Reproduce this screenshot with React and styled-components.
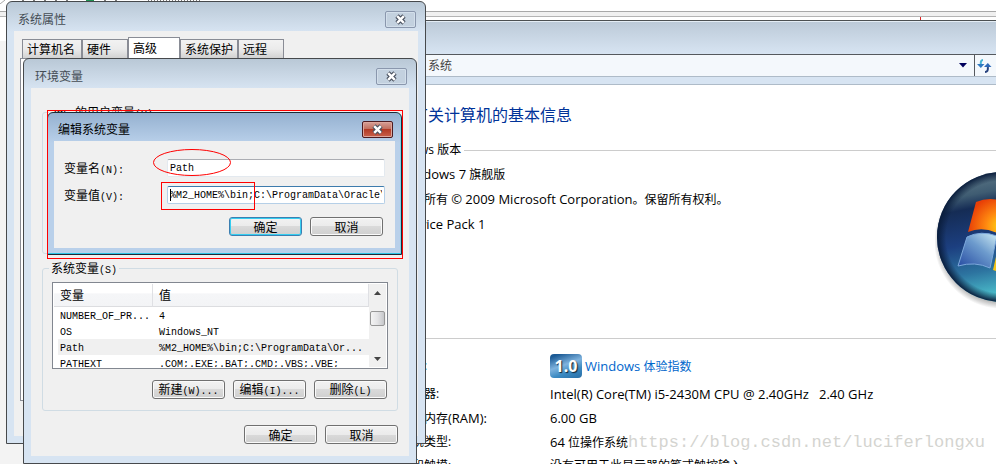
import React from 'react'
import styled, { createGlobalStyle, css } from 'styled-components'

const GlobalStyle = createGlobalStyle`
  * {
    box-sizing: border-box;
  }
  body {
    margin: 0;
    overflow: hidden;
    background: #f3f3f3;
    color: #000;
    font: 12px/16px 'Open Sans', 'Noto Sans CJK SC', sans-serif;
  }
  button, input {
    font: inherit;
    color: inherit;
    margin: 0;
    padding: 0;
  }
`

const Desktop = styled.main`
  position: relative;
  height: 100vh;
  overflow: hidden;
`

/* browser behind everything */
const BrowserTop = styled.div`
  height: 17px;
  background: #fff;
  border-bottom: 1px solid #b4b4b4;
`
const BrowserTabs = styled.div`
  height: 11px;
  > svg {
    display: block;
  }
`
const BrowserLine = styled.div`
  height: 5px;
  border-top: 1px solid #a8a8a8;
  background: #f0f0f0;
`
const BrowserPage = styled.div`
  height: 24px;
  background: #fff;
`
const RedTick = styled.i`
  display: block;
  width: 1px;
  height: 3px;
  margin-left: auto;
  margin-right: 75px;
  background: #d22;
`

/* explorer window */
const Explorer = styled.section`
  position: absolute;
  left: 40px;
  right: 0;
  top: 20px;
  bottom: 0;
  overflow: hidden;
  background: #fff;
  border-top: 1px solid #4c5052;
`
const ExplorerTitle = styled.div`
  height: 33px;
  background: linear-gradient(#bccad8, #d7e4f2);
  border-top: 1px solid #e4edf5;
`
const AddressBar = styled.div`
  display: flex;
  align-items: center;
  height: 23px;
  padding-left: 388px;
  background: #f4f8fc;
  border-top: 1px solid #55595e;
  border-bottom: 1px solid #aebbc8;
  color: #444;
`
const AddressText = styled.span`
  flex: 1;
`
const BarButton = styled.button`
  display: flex;
  align-items: center;
  justify-content: center;
  width: 22px;
  height: 21px;
  border: 0;
  background: none;
  & + & {
    padding-right: 2px;
    border-left: 1px solid #55595e;
  }
`
const ExplorerEdge = styled.div`
  height: 8px;
  background: #d7e4f2;
  border-bottom: 1px solid #aebbc8;
`
const SystemInfo = styled.div`
  padding: 19px 0 0 340px;
`
const Heading = styled.h1`
  margin: 0 0 16px;
  font-size: 16px;
  line-height: 22px;
  font-weight: 400;
  color: #003399;
`
const SectionTitle = styled.h2`
  display: flex;
  align-items: center;
  gap: 3px;
  margin: 0;
  padding-left: 3px;
  font-size: 12px;
  line-height: 16px;
  font-weight: 400;
  white-space: nowrap;
  &::after {
    content: '';
    flex: 1;
    height: 1px;
    background: #ccc;
  }
`
const Edition = styled.div`
  display: flex;
  justify-content: space-between;
  height: 180px;
  padding: 4px 0 0 20px;
`
const EditionText = styled.div`
  white-space: nowrap;
  p {
    margin: 0;
    line-height: 25px;
  }
`
const Orb = styled.svg`
  flex: none;
  margin: 9px -73px 0 0;
`
const Rule = styled.hr`
  height: 1px;
  margin: 0;
  border: 0;
  background: #ccc;
`
const Specs = styled.table`
  margin: 15px 0 0 20px;
  border-collapse: collapse;
  white-space: nowrap;
  th, td {
    height: 24px;
    padding: 0;
    text-align: left;
    font-weight: 400;
  }
  th {
    width: 150px;
  }
  tr:first-child > * {
    height: 28px;
    color: #0066cc;
    vertical-align: top;
    line-height: 24px;
  }
`
const ScoreLink = styled.a`
  display: flex;
  gap: 3px;
  color: #0066cc;
  text-decoration: none;
`
const Score = styled.span`
  width: 32px;
  height: 24px;
  border-radius: 4px;
  background: linear-gradient(160deg, #1b5a95 10%, #7fb3de 45%, #3b8ac2 70%, #2a6ea5);
  color: #fff;
  font: bold 16px/24px 'Noto Sans', sans-serif;
  text-align: center;
  text-shadow: 1px 1px 1px #123;
`
const Latin = styled.span`
  font-size: 13px;
`
const Watermark = styled.div`
  position: absolute;
  right: 11px;
  bottom: 9px;
  color: #d4d4d0;
  font: 17px/24px 'Liberation Mono', monospace;
`

/* dialogs */
const Frame = styled.section`
  position: absolute;
  left: ${p => p.$x}px;
  top: ${p => p.$y}px;
  width: ${p => p.$w}px;
  padding: 0 7px 7px;
  border: 1px solid #46494c;
  border-radius: 6px 6px 0 0;
  background: linear-gradient(#b9c8d6, #d7e4f2 30px);
  font-family: 'Noto Sans CJK SC', sans-serif;
  ${p =>
    p.$active &&
    css`
      padding: 0 6px 6px;
      border-color: #1c2a36;
      background: linear-gradient(#95b1d0, #b9d0ea 30px);
      box-shadow: inset 0 -1px #2ec5e6, inset -1px 0 #7fd4ea;
    `}
`
const TitleBar = styled.header`
  display: flex;
  align-items: center;
  justify-content: space-between;
  height: ${p => (p.$active ? 28 : 29)}px;
  padding: ${p => (p.$active ? 4 : 5)}px 2px 0 4px;
  color: ${p => (p.$active ? '#000' : '#444c54')};
`
const Close = styled.button`
  display: flex;
  align-items: center;
  justify-content: center;
  width: 31px;
  height: 17px;
  border: 1px solid #8a97ad;
  border-radius: 2px;
  background: #c3d1df;
  box-shadow: inset 0 0 0 1px #d3dfeb;
  ${p =>
    p.$active &&
    css`
      border-color: #4d1b20;
      background: linear-gradient(#d5a098, #c3705f 45%, #b23a25 50%, #c9614c);
      box-shadow: inset 0 0 0 1px #dda69c;
    `}
`
const Body = styled.div`
  background: #f0f0f0;
`
const PropsBody = styled(Body)`
  padding: 6px 6px 35px;
`
const EnvBody = styled(Body)`
  padding: 17px 11px 12px;
`
const EditBody = styled(Body)`
  display: flex;
  flex-direction: column;
  gap: 9px;
  padding: 18px 10px 12px;
`
const TabList = styled.div`
  display: flex;
  align-items: flex-end;
  height: 21px;
  padding-left: 2px;
`
const Tab = styled.button`
  width: ${p => p.$w}px;
  height: ${p => (p.$current ? 21 : 19)}px;
  padding-left: 4px;
  border: 1px solid #898c95;
  border-bottom: 0;
  background: ${p => (p.$current ? '#fff' : 'linear-gradient(#f2f2f2, #ebebeb 50%, #d2d2d2)')};
  line-height: 18px;
  text-align: left;
`
const TabPanel = styled.div`
  height: 343px;
  background: #fff;
  border: 1px solid #898c95;
`
const Group = styled.fieldset`
  min-width: 0;
  height: ${p => p.$h}px;
  margin: 0 0 7px;
  padding: 7px 9px 0;
  border: 1px solid #d0dce4;
  border-radius: 3px;
  & + & {
    margin-bottom: 14px;
  }
`
const Legend = styled.legend`
  padding: 0 2px;
  margin-left: -3px;
  height: 14px;
  line-height: 14px;
`
/* latin glyphs are half the width of the chinese ones */
const Half = styled.span`
  font: 10px/12px 'Liberation Mono', monospace;
  white-space: pre;
`
const Buttons = styled.div`
  display: flex;
  justify-content: flex-end;
  gap: 8px;
  margin-top: ${p => p.$top || 0}px;
  padding-right: ${p => p.$end || 0}px;
`
const Button = styled.button`
  width: 73px;
  height: 19px;
  border: 1px solid ${p => (p.$primary ? '#3c7fb1' : '#707070')};
  border-radius: 3px;
  background: linear-gradient(#f2f2f2, #ebebeb 50%, #dadada 50%, #cfcfcf);
  box-shadow: inset 0 0 0 1px ${p => (p.$primary ? '#35cdf0' : '#fafafa')};
  line-height: 16px;
  white-space: nowrap;
`
const List = styled.div`
  display: flex;
  height: 87px;
  padding: 1px;
  border: 1px solid #828790;
  background: #fff;
  overflow: hidden;
`
const ListView = styled.div`
  flex: 1;
  overflow: hidden;
`
const Variables = styled.table`
  width: 100%;
  table-layout: fixed;
  border-spacing: 0;
  th, td {
    padding: 0 0 0 6px;
    text-align: left;
    font-weight: 400;
    white-space: nowrap;
  }
  th {
    height: 23px;
    background: linear-gradient(#fff 40%, #f5f6f8 45%, #f3f4f6);
    border-right: 1px solid #dfe0e4;
    border-bottom: 1px solid #dcdde0;
  }
  th:first-child {
    width: 99px;
  }
`
const Row = styled.tr`
  td {
    height: 16px;
    line-height: 12px;
    background: ${p => (p.$selected ? '#f0f0f0' : '#fff')};
  }
  td:first-child {
    padding-left: 2px;
    border-left: 4px solid #fff;
  }
`
const Scroll = styled.div`
  display: flex;
  flex-direction: column;
  width: 17px;
  background: #f0f0f0;
`
const Arrow = styled.button`
  height: 17px;
  border: 0;
  background: none;
  > svg {
    display: block;
    margin: auto;
  }
`
const Track = styled.div`
  flex: 1;
  padding: 10px 1px 0;
`
const Thumb = styled.div`
  height: 15px;
  border: 1px solid #979797;
  border-radius: 2px;
  background: linear-gradient(to right, #f4f4f4, #e4e4e6 50%, #c6c7ca);
`
const Field = styled.div`
  display: flex;
  align-items: center;
  label {
    width: 103px;
  }
  input {
    flex: 1;
    min-width: 0;
    height: 18px;
    padding: 0 2px;
    border: 1px solid #e3e9ef;
    border-top-color: #abadb3;
    border-radius: 2px;
    background: #fff;
    font: 10px/14px 'Liberation Mono', monospace;
    outline: 0;
  }
`
const FocusField = styled(Field)`
  margin-bottom: 4px;
  input {
    border-color: #b5cfe7;
    border-top-color: #3d7bad;
    background: linear-gradient(#000, #000) 2px 2px / 1px 12px no-repeat, #fff;
  }
`
const Marks = styled.svg`
  position: absolute;
  left: 47px;
  top: 110px;
  pointer-events: none;
`

const CloseButton = ({ active }) => (
  <Close $active={active} aria-label="关闭">
    <svg width="13" height="11" viewBox="0 0 13 11">
      <path d="M3 2 L10 9 M10 2 L3 9" stroke="#4a5260" strokeWidth="4.6" />
      <path d="M3.2 2.2 L9.8 8.8 M9.8 2.2 L3.2 8.8" stroke="#fff" strokeWidth="2.4" />
    </svg>
  </Close>
)

const Dialog = ({ title, active, children, ...rest }) => (
  <Frame $active={active} {...rest}>
    <TitleBar $active={active}>
      {title}
      <CloseButton active={active} />
    </TitleBar>
    {children}
  </Frame>
)

const tabs = [
  ['计算机名', 60],
  ['硬件', 46],
  ['高级', 52, true],
  ['系统保护', 58],
  ['远程', 46],
]

const variables = [
  ['NUMBER_OF_PR...', '4'],
  ['OS', 'Windows_NT'],
  ['Path', '%M2_HOME%\\bin;C:\\ProgramData\\Or...'],
  ['PATHEXT', '.COM;.EXE;.BAT;.CMD;.VBS;.VBE;'],
]

const specs = [
  ['处理器:', <Latin>Intel(R) Core(TM) i5-2430M CPU @ 2.40GHz{'\u00a0\u00a0 '}2.40 GHz</Latin>],
  [<>安装内存<Latin>(RAM):</Latin></>, <Latin>6.00 GB</Latin>],
  ['系统类型:', <><Latin>64</Latin> 位操作系统</>],
  ['笔和触摸:', '没有可用于此显示器的笔式触控输入'],
]

const WindowsOrb = () => (
  <Orb width="134" height="138" viewBox="0 0 134 138" aria-hidden="true">
    <defs>
      <linearGradient id="sky" x1="0" y1="0" x2="0.2" y2="1">
        <stop offset="0" stopColor="#6b8490" />
        <stop offset="0.22" stopColor="#3f5c72" />
        <stop offset="0.32" stopColor="#152c55" />
        <stop offset="0.58" stopColor="#1c3f80" />
        <stop offset="0.8" stopColor="#2d74a0" />
        <stop offset="1" stopColor="#4cc0cc" />
      </linearGradient>
      <radialGradient id="rim">
        <stop offset="0.86" stopColor="#0a1d3c" stopOpacity="0" />
        <stop offset="1" stopColor="#0a1d3c" />
      </radialGradient>
      <radialGradient id="red" cx="0.9" cy="0.8" r="0.9">
        <stop offset="0" stopColor="#ffd914" />
        <stop offset="0.45" stopColor="#ff8a10" />
        <stop offset="1" stopColor="#e83f07" />
      </radialGradient>
      <linearGradient id="blue" x1="0" y1="1" x2="0.9" y2="0">
        <stop offset="0" stopColor="#2348a0" />
        <stop offset="0.6" stopColor="#6d9bcd" />
        <stop offset="1" stopColor="#c4e3f0" />
      </linearGradient>
      <radialGradient id="shade">
        <stop offset="0.88" stopColor="#555" stopOpacity="0.5" />
        <stop offset="1" stopColor="#555" stopOpacity="0" />
      </radialGradient>
    </defs>
    <circle cx="67" cy="70" r="68" fill="url(#shade)" />
    <circle cx="67" cy="66" r="65" fill="url(#sky)" />
    <circle cx="67" cy="66" r="65" fill="url(#rim)" />
    <path d="M41 31 Q55 25 70 31 L62 62 Q47 55 33 61 Z" fill="url(#red)" />
    <path d="M32 66 Q46 59 62 65 L55 97 Q40 90 23 95 Z" fill="url(#blue)" stroke="#7da9dc" strokeWidth="1" />
    <path d="M74 33 Q88 37 102 31 L94 62 Q80 67 66 63 Z" fill="#7ab82c" />
    <path d="M65 68 Q79 72 92 67 L84 98 Q71 104 58 99 Z" fill="#f5c417" />
  </Orb>
)

const ExplorerWindow = () => (
  <Explorer>
    <ExplorerTitle />
    <AddressBar>
      <AddressText>系统</AddressText>
      <BarButton aria-label="历史记录">
        <svg width="8" height="5">
          <path d="M0 0 H8 L4 4.5 Z" fill="#00005c" />
        </svg>
      </BarButton>
      <BarButton aria-label="刷新">
        <svg width="15" height="14" viewBox="0 0 15 14">
          <path d="M6 1 Q3.5 1 3.8 5" fill="none" stroke="#48b4d2" strokeWidth="2" />
          <path d="M0 5 H7.5 L3.8 9 Z" fill="#2f78c0" />
          <path d="M8 13 Q11.5 13 10.8 8" fill="none" stroke="#24407c" strokeWidth="2" />
          <path d="M7 8 H14.5 L10.8 4 Z" fill="#2c68b8" />
        </svg>
      </BarButton>
    </AddressBar>
    <ExplorerEdge />
    <SystemInfo>
      <Heading>查看有关计算机的基本信息</Heading>
      <SectionTitle>Windows 版本</SectionTitle>
      <Edition>
        <EditionText>
          <p><Latin>Windows 7</Latin> 旗舰版</p>
          <p>版权所有 <Latin>© 2009 Microsoft Corporation</Latin>。保留所有权利。</p>
          <p><Latin>Service Pack 1</Latin></p>
        </EditionText>
        <WindowsOrb />
      </Edition>
      <Rule />
      <Specs>
        <tbody>
          <tr>
            <th scope="row">分级:</th>
            <td>
              <ScoreLink href="#score">
                <Score>1.0</Score>
                <span><Latin>Windows</Latin> 体验指数</span>
              </ScoreLink>
            </td>
          </tr>
          {specs.map(([name, value], i) => (
            <tr key={i}>
              <th scope="row">{name}</th>
              <td>{value}</td>
            </tr>
          ))}
        </tbody>
      </Specs>
    </SystemInfo>
  </Explorer>
)

const SystemProperties = () => (
  <Dialog title="系统属性" $x={6} $y={1} $w={420}>
    <PropsBody>
      <TabList role="tablist">
        {tabs.map(([name, width, current]) => (
          <Tab key={name} role="tab" aria-selected={!!current} $w={width} $current={current}>
            {name}
          </Tab>
        ))}
      </TabList>
      <TabPanel role="tabpanel" />
    </PropsBody>
  </Dialog>
)

const EnvironmentVariables = () => (
  <Dialog title="环境变量" $x={23} $y={58} $w={394}>
    <EnvBody>
      <Group $h={149}>
        <Legend>
          <Half>ZML </Half>的用户变量<Half>(V)</Half>
        </Legend>
      </Group>
      <Group $h={150}>
        <Legend>
          系统变量<Half>(S)</Half>
        </Legend>
        <List>
          <ListView>
            <Variables>
              <thead>
                <tr>
                  <th>变量</th>
                  <th>值</th>
                </tr>
              </thead>
              <tbody>
                {variables.map(([name, value]) => (
                  <Row key={name} $selected={name === 'Path'}>
                    <td><Half>{name}</Half></td>
                    <td><Half>{value}</Half></td>
                  </Row>
                ))}
              </tbody>
            </Variables>
          </ListView>
          <Scroll>
            <Arrow aria-label="向上">
              <svg width="7" height="4"><path d="M0 4 L3.5 0 L7 4 Z" fill="#444" /></svg>
            </Arrow>
            <Track>
              <Thumb />
            </Track>
            <Arrow aria-label="向下">
              <svg width="7" height="4"><path d="M0 0 L3.5 4 L7 0 Z" fill="#444" /></svg>
            </Arrow>
          </Scroll>
        </List>
        <Buttons $top={11} $end={1}>
          <Button>新建<Half>(W)...</Half></Button>
          <Button>编辑<Half>(I)...</Half></Button>
          <Button>删除<Half>(L)</Half></Button>
        </Buttons>
      </Group>
      <Buttons>
        <Button>确定</Button>
        <Button>取消</Button>
      </Buttons>
    </EnvBody>
  </Dialog>
)

const EditVariable = () => (
  <Dialog title="编辑系统变量" active $x={47} $y={112} $w={355}>
    <EditBody>
      <Field>
        <label htmlFor="name">变量名<Half>(N):</Half></label>
        <input id="name" defaultValue="Path" />
      </Field>
      <FocusField>
        <label htmlFor="value">变量值<Half>(V):</Half></label>
        <input id="value" defaultValue="%M2_HOME%\bin;C:\ProgramData\Oracle\Java\javapath" />
      </FocusField>
      <Buttons $end={2}>
        <Button $primary>确定</Button>
        <Button>取消</Button>
      </Buttons>
    </EditBody>
  </Dialog>
)

const App = () => (
  <>
    <GlobalStyle />
    <Desktop>
      <BrowserTop>
        <BrowserTabs>
          <svg width="200" height="4">
            <path d="M0 4 L5 0" stroke="#aaa" />
            <path d="M86 0 H94 V1 H86 Z" fill="#1e9050" />
            <path d="M22 0.5 H76 M104 0.5 H122" stroke="#777" strokeDasharray="2 9" />
            <path d="M148 0.5 H200" stroke="#777" strokeDasharray="1 2" />
          </svg>
        </BrowserTabs>
        <BrowserLine />
      </BrowserTop>
      <BrowserPage>
        <RedTick />
      </BrowserPage>
      <ExplorerWindow />
      <Watermark>https://blog.csdn.net/luciferlongxu</Watermark>
      <SystemProperties />
      <EnvironmentVariables />
      <EditVariable />
      <Marks width="357" height="150" fill="none" stroke="#f00">
        <rect x="0.5" y="0.5" width="355" height="148" />
        <ellipse cx="145" cy="52.5" rx="38.5" ry="13" />
        <rect x="114.5" y="72.5" width="93" height="27" />
      </Marks>
    </Desktop>
  </>
)

export default App
